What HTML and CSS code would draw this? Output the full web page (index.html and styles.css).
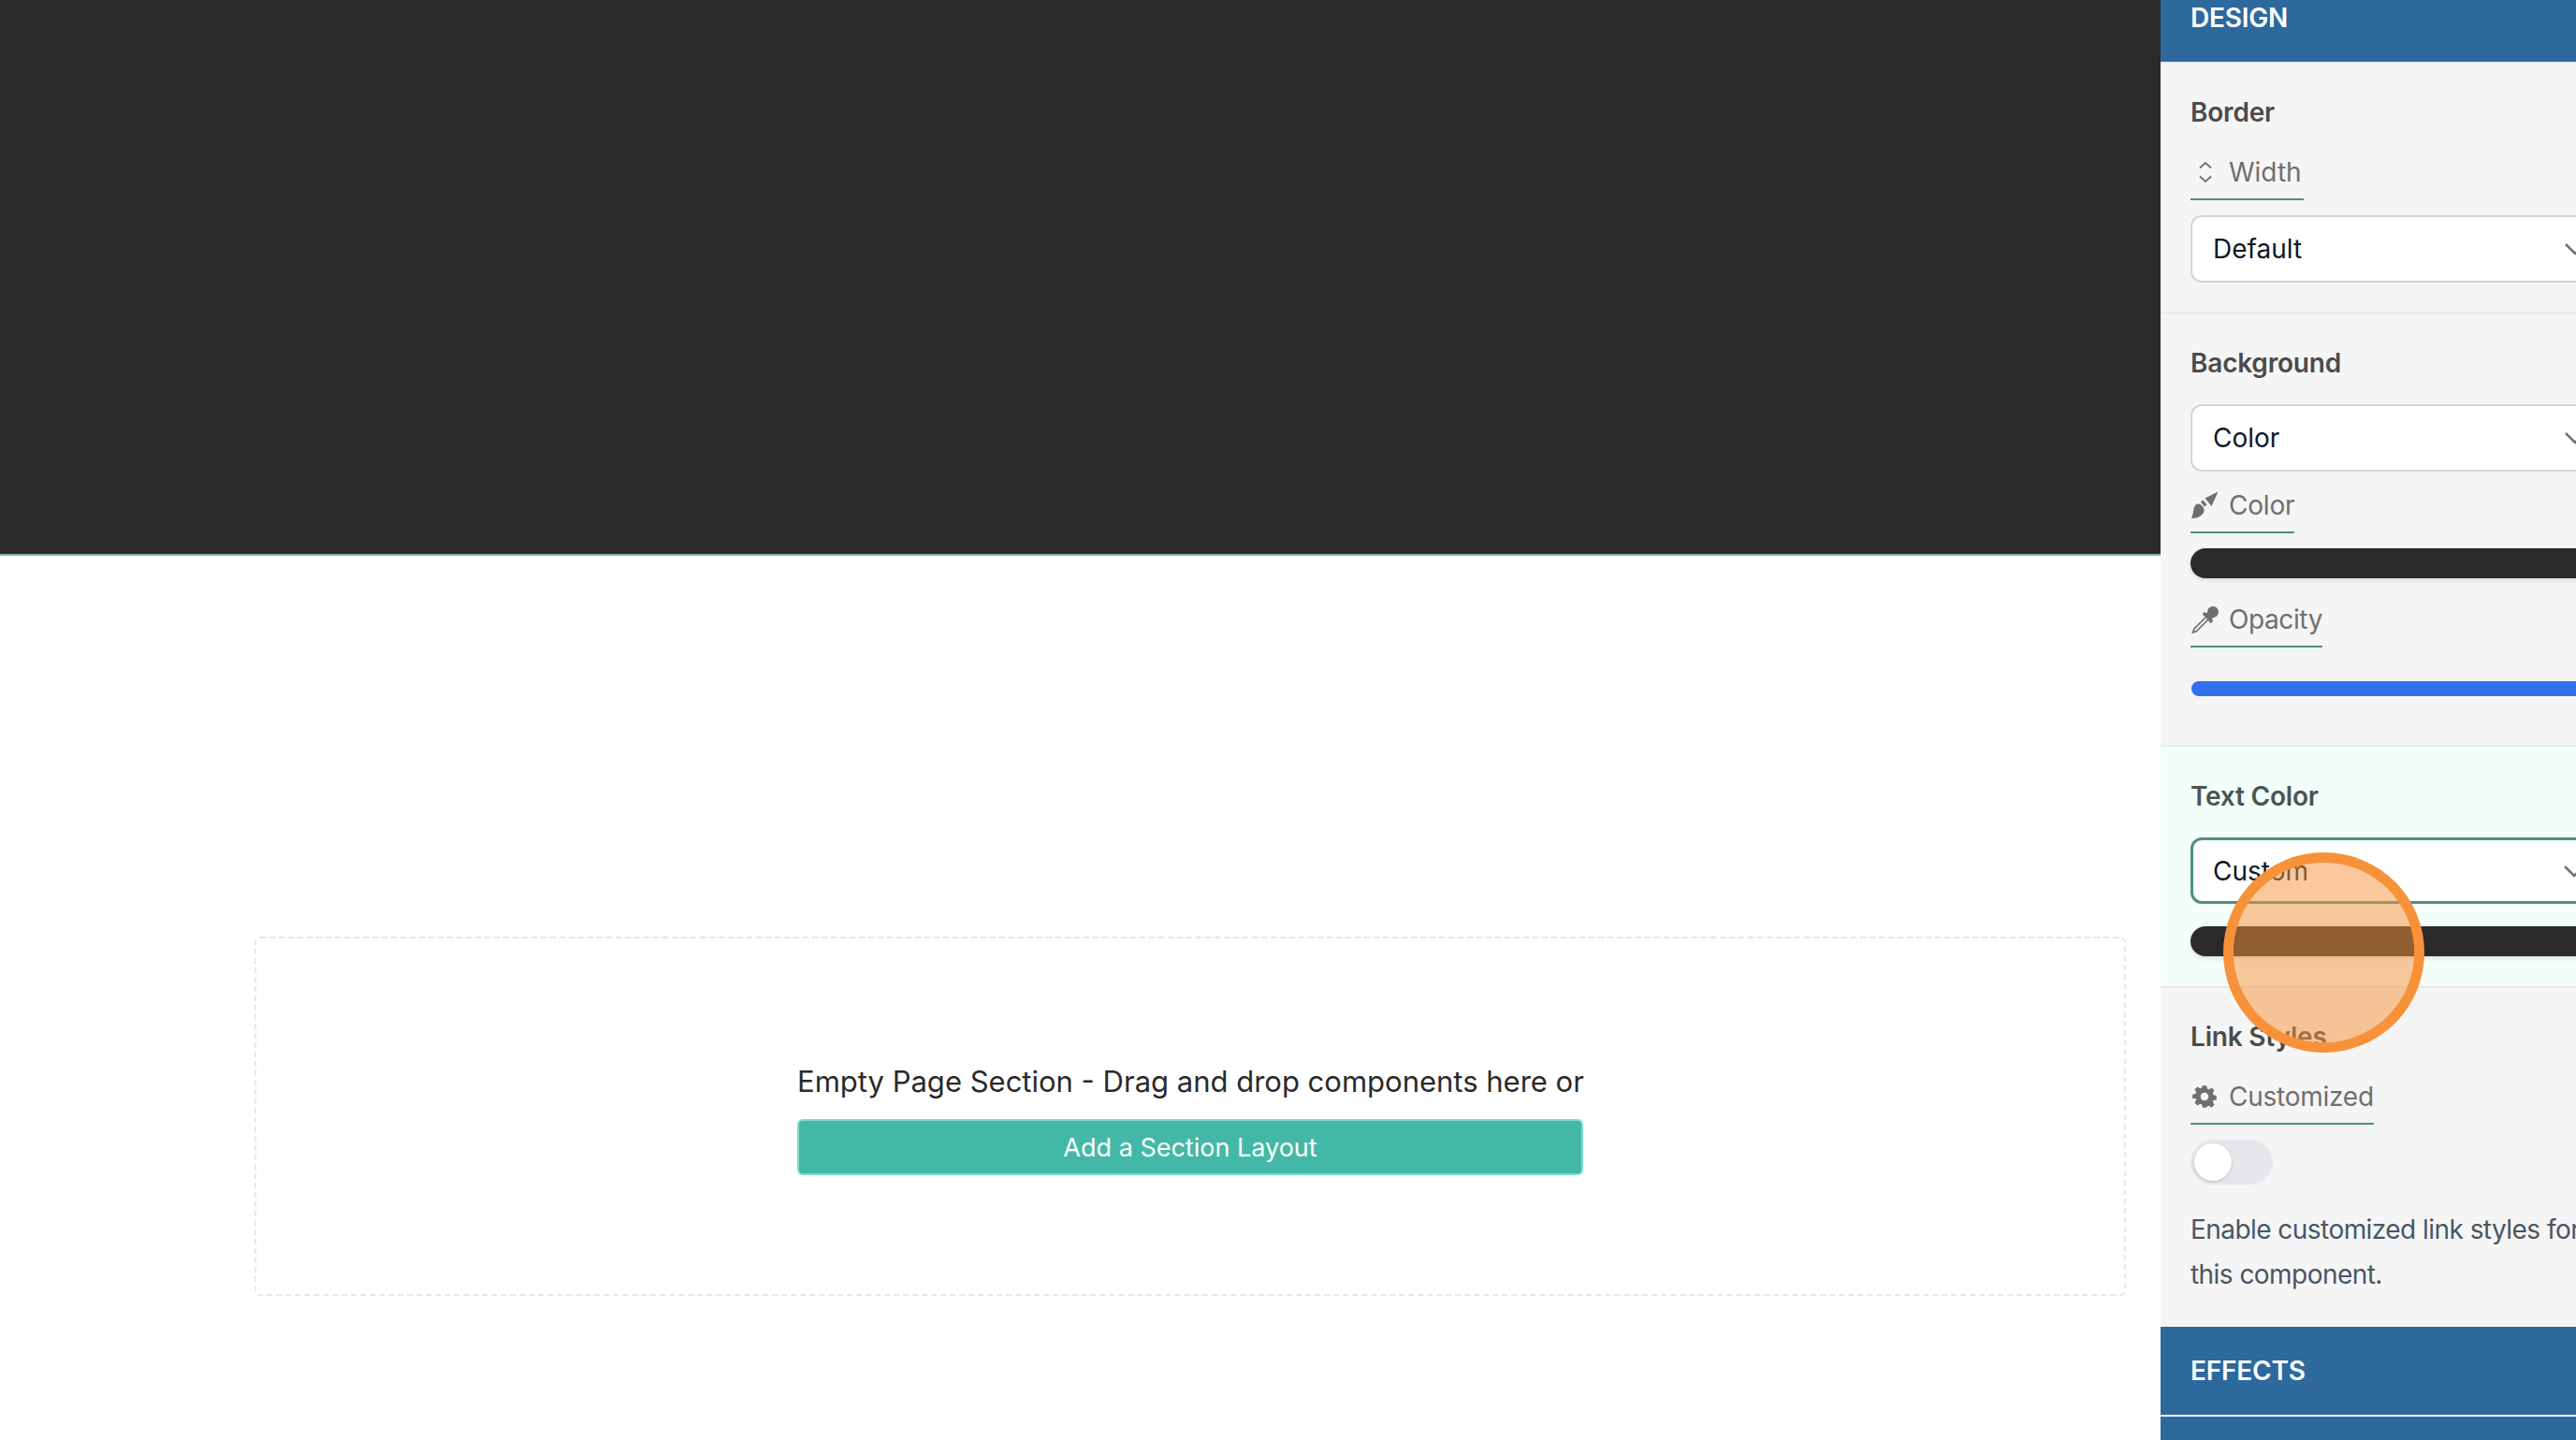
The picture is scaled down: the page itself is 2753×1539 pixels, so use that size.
FILE: index.html
```html
<!DOCTYPE html>
<html lang="en">
<head>
  <meta charset="UTF-8" />
  <title>Page Builder</title>
  <link rel="stylesheet" href="styles.css">
</head>
<body>

<main class="canvas">
  <div class="hero"></div>
  <div class="empty-section">
    <div class="empty-inner">
      <div class="empty-text">Empty Page Section - Drag and drop components here or</div>
      <button class="add-btn">Add a Section Layout</button>
    </div>
  </div>
</main>

<aside class="panel">
  <div class="panel-head panel-head-top">DESIGN</div>

  <section class="group group-border">
    <h3 class="group-title">Border</h3>
    <div class="field-label label-width">
      <svg class="icon" viewBox="0 0 30 30"><path d="M10 10.500l6-5.500 6 5.500M10 19.500l6 5.500 6-5.500" fill="none" stroke="#6f6f6f" stroke-width="1.800"/></svg>
      <span>Width</span>
    </div>
    <div class="select"><span>Default</span><svg class="chev" viewBox="0 0 24 14"><path d="M2 2l10 10L22 2" fill="none" stroke="#6b7280" stroke-width="2.6"/></svg></div>
  </section>

  <section class="group group-bg">
    <h3 class="group-title">Background</h3>
    <div class="select select-bg"><span>Color</span><svg class="chev" viewBox="0 0 24 14"><path d="M2 2l10 10L22 2" fill="none" stroke="#6b7280" stroke-width="2.6"/></svg></div>
    <div class="field-label label-color">
      <svg class="icon" viewBox="0 0 30 30"><path d="M29.500 .5L15.500 7.500l7 8.500zM13.500 9.500l-2.500 2 4 5 2.500-2zM8.500 13.500c-3 0-4.500 2.500-5 5C3 22 2.500 25.500 1 29c4 0 8.500-1 11-3.500 3-3 3.500-6 1.500-8.500-1.200-1.800-3.200-3.500-5-3.500z" fill="#6f6f6f"/></svg>
      <span>Color</span>
    </div>
    <div class="swatch"></div>
    <div class="field-label label-opacity">
      <svg class="icon" viewBox="0 0 30 30">
        <circle cx="24" cy="7" r="6" fill="#6f6f6f"/>
        <path d="M15 10l8-7 5 6-7 8z" fill="#6f6f6f"/>
        <path d="M14 8l9 10" stroke="#6f6f6f" stroke-width="3.500" fill="none"/>
        <path d="M16 13L4 25l-1.500 4 4-1.500L18.500 15.500" stroke="#6f6f6f" stroke-width="1.700" fill="none"/>
      </svg>
      <span>Opacity</span>
    </div>
    <div class="slider-box"><div class="slider-bar"></div></div>
  </section>

  <section class="group group-text">
    <h3 class="group-title">Text Color</h3>
    <div class="select select-active"><span>Custom</span><svg class="chev" viewBox="0 0 24 14"><path d="M2 2l10 10L22 2" fill="none" stroke="#6b7280" stroke-width="2.6"/></svg></div>
    <div class="swatch swatch-text"></div>
  </section>

  <section class="group group-link">
    <h3 class="group-title">Link Styles</h3>
    <div class="field-label label-custom">
      <svg class="icon" viewBox="-2 -2 28 28"><path d="M10 1h4l.7 3.100 1.700.7 2.700-1.700 2.800 2.800-1.700 2.700.7 1.700 3.100.7v4l-3.100.7-.7 1.700 1.700 2.700-2.800 2.800-2.700-1.700-1.700.7L14 23h-4l-.7-3.100-1.700-.7-2.700 1.700-2.800-2.800 1.700-2.700-.7-1.700L0 14v-4l3.100-.7.7-1.700L2.100 4.900l2.800-2.800 2.700 1.700 1.700-.7zM12 8a4 4 0 1 0 0 8 4 4 0 0 0 0-8z" fill="#6f6f6f" fill-rule="evenodd"/></svg>
      <span>Customized</span>
    </div>
    <div class="toggle"><div class="knob"></div></div>
    <p class="help">Enable customized link styles for this component.</p>
  </section>

  <div class="panel-head">EFFECTS</div>
  <div class="panel-head panel-head-next"></div>
</aside>

<div class="click-marker"></div>

</body>
</html>
```

FILE: styles.css
```css
* { box-sizing: border-box; }

html, body {
  height: 100%;
}

body {
  margin: 0;
  display: flex;
  overflow: hidden;
  background: #fff;
  font-family: Inter, "Noto Sans", sans-serif;
}

.canvas {
  flex: 1;
  min-width: 0;
}
.hero {
  height: 594px;
  background: #2b2a29;
  border-bottom: 2px solid #7fb5ac;
}
.empty-section {
  margin: 407px 37px 0 272px;
  height: 384px;
  border: 2px dashed #e8e8e8;
  border-radius: 6px;
  display: flex;
  justify-content: center;
  padding-top: 131px;
}
.empty-inner {
  width: 840px;
}
.empty-text {
  font-size: 31px;
  line-height: 44px;
  color: #2b2a29;
  text-align: center;
  white-space: nowrap;
}
.add-btn {
  display: block;
  width: 100%;
  height: 60px;
  margin-top: 18px;
  background: #44b8a6;
  border: 2px solid #7fdccb;
  border-radius: 6px;
  color: #fff;
  font-family: inherit;
  font-size: 27px;
}

.panel {
  width: 444px;
  flex: none;
  height: 100%;
  overflow: hidden;
  background: #f5f5f5;
}
.panel-head {
  height: 96px;
  padding: 0 32px;
  background: #2d699c;
  color: #fff;
  font-size: 28px;
  font-weight: 600;
  letter-spacing: -.2px;
  line-height: 94px;
  border-bottom: 2px solid #fff;
}
.panel-head-top {
  height: 68px;
  line-height: 38px;
  border-bottom-color: #e6eef5;
}
.panel-head-next {
  height: 40px;
  border: none;
}

.group {
  padding: 0 32px;
  border-bottom: 2px solid #ebebeb;
}
.group-border { height: 268px; padding-top: 34px; }
.group-bg { height: 462px; padding-top: 34px; }
.group-text { height: 258px; padding-top: 35px; background: #f3fdfa; border-bottom-color: #e6e8ec; }
.group-link { height: 362px; padding-top: 34px; border: none; }

.group-title {
  margin: 0;
  font-size: 28px;
  font-weight: 600;
  letter-spacing: -.2px;
  line-height: 36px;
  color: #4b4b4b;
}
.group-text .group-title { color: #4a5552; }

.field-label {
  display: inline-flex;
  align-items: center;
  gap: 11px;
  height: 54px;
  padding-bottom: 4px;
  border-bottom: 2px solid #4f8f85;
  font-size: 28px;
  color: #6f6f6f;
}
.icon {
  width: 30px;
  height: 30px;
}
.label-width { margin-top: 22px; padding-right: 2px; }
.label-color { margin-top: 12px; letter-spacing: -.2px; }
.label-opacity { margin-top: 20px; letter-spacing: -.4px; }
.label-custom { margin-top: 22px; letter-spacing: -.25px; }

.select {
  display: flex;
  align-items: center;
  justify-content: space-between;
  width: 440px;
  height: 72px;
  margin-top: 16px;
  padding: 0 15px 0 22px;
  background: #fff;
  border: 2px solid #d1d5db;
  border-radius: 12px;
  font-size: 28px;
  color: #111827;
}
.select-bg { margin-top: 26px; }
.select-active {
  height: 71px;
  margin-top: 26px;
  padding-left: 21px;
  border: 3px solid #4f8f85;
}
.chev {
  width: 24px;
  height: 14px;
}

.swatch {
  display: block;
  width: 440px;
  height: 32px;
  margin-top: 16px;
  background: #2b2a29;
  border-radius: 16px;
  box-shadow: 0 2px 5px rgba(0, 0, 0, .12);
}
.swatch-text { margin-top: 24px; }

.slider-box {
  width: 440px;
  height: 48px;
  margin-top: 23px;
  padding: 13px 1px;
  border-radius: 12px;
  box-shadow: 0 1px 3px rgba(0, 0, 0, .03);
}
.slider-bar {
  height: 16px;
  background: #3370eb;
  border-radius: 8px;
}

.toggle {
  width: 88px;
  height: 48px;
  margin-top: 16px;
  padding: 4px;
  background: #e5e7eb;
  border-radius: 24px;
}
.knob {
  width: 40px;
  height: 40px;
  background: #fff;
  border-radius: 50%;
  box-shadow: 0 1px 3px rgba(0, 0, 0, .2);
}
.help {
  width: 440px;
  margin: 24px 0 0;
  font-size: 28px;
  letter-spacing: -.55px;
  line-height: 48px;
  color: #4b5563;
}

/* click marker from the recording, sits over the panel */
.click-marker {
  position: absolute;
  left: 2376px;
  top: 911px;
  width: 215px;
  height: 214px;
  border: 11px solid #f7923a;
  border-radius: 50%;
  background: rgba(247, 145, 56, .5);
  background-clip: padding-box;
}
```
